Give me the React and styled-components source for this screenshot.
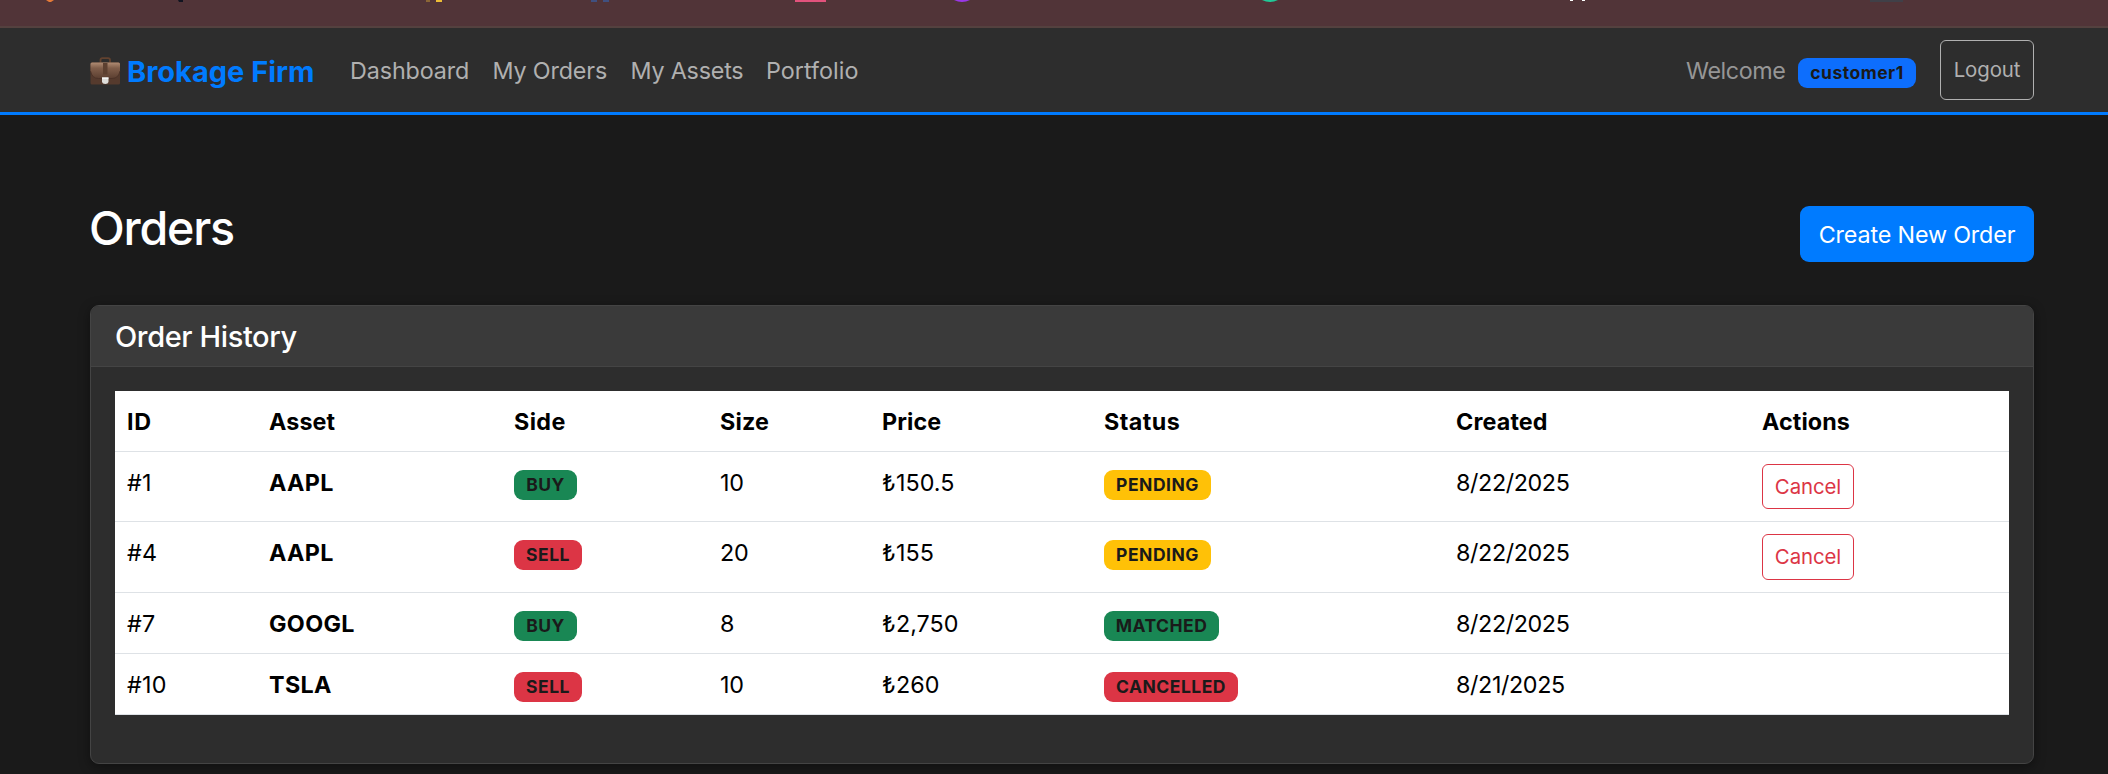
import React from "react";
import styled, { createGlobalStyle } from "styled-components";

const GlobalStyle = createGlobalStyle`
  * { box-sizing: border-box; }
  body {
    margin: 0;
    height: 774px;
    overflow: hidden;
    background: #1a1a1a;
    color: #fff;
    font-family: Inter, "Liberation Sans", sans-serif;
    font-size: 23.3px;
    line-height: 36px;
  }
`;

const BookmarkStrip = styled.div`
  height: 28px;
  background: #513438;
  border-bottom: 2px solid #54413f;
  overflow: hidden;
  svg { display: block; }
`;

const Navbar = styled.header`
  display: flex;
  align-items: center;
  height: 87px;
  padding: 0 74px 0 90px;
  background: #2d2d2d;
  border-bottom: 3px solid #007bff;
`;

const Brand = styled.a`
  display: flex;
  align-items: center;
  gap: 6px;
  width: 248px;
  padding-top: 3px;
  margin-right: 12px;
  font-size: 29px;
  font-weight: 700;
  color: #007bff;
  white-space: nowrap;
  svg { margin-bottom: 1px; }
`;

const NavLinks = styled.nav`
  display: flex;
  padding-top: 2px;
`;

const NavLink = styled.a`
  width: ${(p) => p.$width}px;
  color: #b0b0b0;
  letter-spacing: ${(p) => p.$tracking || 0}px;
  white-space: nowrap;
`;

const UserArea = styled.div`
  display: flex;
  align-items: center;
  margin-left: auto;
`;

const Welcome = styled.span`
  display: flex;
  align-items: baseline;
  gap: 12.5px;
  padding-top: 2px;
  margin-right: 24px;
  color: #969696;
  letter-spacing: -0.4px;
`;

const tones = {
  primary: "#0d6efd",
  success: "#198754",
  danger: "#dc3545",
  warning: "#ffc107",
};

const Badge = styled.span`
  display: inline-block;
  width: ${(p) => p.$width}px;
  height: 30px;
  padding: 6px 0;
  border-radius: 9px;
  background: ${(p) => tones[p.$tone]};
  color: #1a1a1a;
  font-size: 17.5px;
  font-weight: 700;
  line-height: 18px;
  letter-spacing: 0.5px;
  text-align: center;
  white-space: nowrap;
`;

const OutlineButton = styled.button`
  display: block;
  width: ${(p) => p.$width}px;
  height: ${(p) => p.$height}px;
  padding: 0;
  border: 1px solid ${(p) => p.$color};
  border-radius: 6px;
  background: transparent;
  color: ${(p) => p.$color};
  font: 400 20.4px/30px Inter, "Liberation Sans", sans-serif;
  letter-spacing: -0.1px;
`;

const CancelButton = styled(OutlineButton)`
  margin-top: -1px;
`;

const Main = styled.main`
  padding: 84px 74px 0 90px;
`;

const PageHeading = styled.div`
  display: flex;
  justify-content: space-between;
  align-items: center;
  height: 70px;
  margin-bottom: 36px;
`;

const Title = styled.h1`
  margin: 0 0 12px -1px;
  font-size: 46.6px;
  font-weight: 500;
  line-height: 58px;
  letter-spacing: -1.2px;
`;

const PrimaryButton = styled.button`
  width: 234px;
  height: 56px;
  padding: 1px 0 0;
  border: 0;
  border-radius: 9px;
  background: #007bff;
  color: #fff;
  font: 400 23.3px/36px Inter, "Liberation Sans", sans-serif;
  letter-spacing: -0.15px;
`;

const Card = styled.section`
  border: 1px solid #444;
  border-radius: 9px;
  background: #2d2d2d;
  box-shadow: 0 3px 12px rgba(0, 0, 0, 0.4);
`;

const CardHeader = styled.h5`
  margin: 0;
  height: 61px;
  padding: 12px 24px;
  border-bottom: 1px solid #444;
  border-radius: 8px 8px 0 0;
  background: #3a3a3a;
  font-size: 29px;
  font-weight: 500;
  line-height: 37px;
  letter-spacing: -0.38px;
`;

const CardBody = styled.div`
  padding: 24px 24px 48px;
`;

const Table = styled.table`
  width: 100%;
  table-layout: fixed;
  border-collapse: separate;
  border-spacing: 0;
  background: #fff;
  color: #000;
`;

const Row = styled.tr`
  height: ${(p) => p.$height || 61}px;
`;

const cell = `
  padding: 13px 0 0 12px;
  border-bottom: 1px solid #dee2e6;
  text-align: left;
  vertical-align: top;
  line-height: 36px;
  white-space: nowrap;
`;

const HeadCell = styled.th`
  ${cell}
  font-weight: 700;
  letter-spacing: ${(p) => p.$tracking || 0}px;
`;

const Cell = styled.td`
  ${cell}
  font-weight: ${(p) => (p.$strong ? 700 : 400)};
  letter-spacing: ${(p) => p.$tracking || 0}px;
`;

const Briefcase = () => (
  <svg width="31" height="28" viewBox="0 0 31 28">
    <defs>
      <linearGradient id="leather" x1="0" y1="0" x2="0" y2="1">
        <stop offset="0" stopColor="#b08c73" />
        <stop offset="0.35" stopColor="#805e4a" />
        <stop offset="1" stopColor="#5b3f31" />
      </linearGradient>
    </defs>
    <path d="M10.5 6V3Q10.5 1.2 12.5 1.2H18Q20 1.2 20 3V6" fill="none" stroke="#62422f" strokeWidth="1.8" />
    <rect x="0.5" y="5.5" width="29.5" height="22" rx="1.5" fill="#553a2d" />
    <path d="M0.5 7Q0.5 5.5 2 5.5H28.5Q30 5.5 30 7V14Q28.5 21.5 22 21.5H8.5Q2 21.5 0.5 14Z" fill="url(#leather)" />
    <path d="M0.5 14Q2 21.5 8.5 21.5H22Q28.5 21.5 30 14" fill="none" stroke="#493026" strokeWidth="0.8" />
    <rect x="13" y="6" width="4.5" height="11.5" fill="#5d4030" />
    <path d="M12 20.5H18.5V25Q18 26.8 15.3 27Q12.5 26.8 12 25Z" fill="#deddda" />
    <rect x="12" y="20.5" width="6.5" height="1.2" fill="#fff" />
  </svg>
);

const Favicons = () => (
  <svg width="2108" height="3" viewBox="0 0 2108 3">
    <path d="M46 0H54L51 2H49Z" fill="#e57a38" />
    <path d="M178 0H183V2H179Z" fill="#111420" />
    <rect x="426" width="4" height="2" fill="#8b6636" />
    <rect x="436" width="6" height="2" fill="#edbd36" />
    <rect x="591" width="6" height="2" fill="#405080" />
    <rect x="603" width="6" height="2" fill="#405080" />
    <rect x="795" width="31" height="2" fill="#e2527c" />
    <path d="M954 0H970Q962 4 954 0Z" fill="#9a38e8" />
    <path d="M1262 0H1278Q1270 4 1262 0Z" fill="#20c997" />
    <rect x="1570" width="3" height="1" fill="#fff" />
    <rect x="1582" width="3" height="1" fill="#fff" />
    <rect x="1870" width="33" height="2" fill="#404048" />
  </svg>
);

const columns = [
  { label: "ID", width: 142, tracking: 0.7 },
  { label: "Asset", width: 245, tracking: 0.1 },
  { label: "Side", width: 206, tracking: 0.4 },
  { label: "Size", width: 162, tracking: 0.2 },
  { label: "Price", width: 222, tracking: 0.15 },
  { label: "Status", width: 352, tracking: 0.45 },
  { label: "Created", width: 306, tracking: 0.15 },
  { label: "Actions", width: 259, tracking: 0.1 },
];

const sides = {
  BUY: { tone: "success", width: 63 },
  SELL: { tone: "danger", width: 68 },
};

const statuses = {
  PENDING: { tone: "warning", width: 107 },
  MATCHED: { tone: "success", width: 115 },
  CANCELLED: { tone: "danger", width: 134 },
};

const orders = [
  { id: "#1", asset: "AAPL", side: "BUY", size: 10, price: "₺150.5", status: "PENDING", created: "8/22/2025", height: 70, button: 45 },
  { id: "#4", asset: "AAPL", side: "SELL", size: 20, price: "₺155", status: "PENDING", created: "8/22/2025", height: 71, button: 46 },
  { id: "#7", asset: "GOOGL", side: "BUY", size: 8, price: "₺2,750", status: "MATCHED", created: "8/22/2025" },
  { id: "#10", asset: "TSLA", side: "SELL", size: 10, price: "₺260", status: "CANCELLED", created: "8/21/2025" },
];

export default function App() {
  return (
    <>
      <GlobalStyle />
      <BookmarkStrip><Favicons /></BookmarkStrip>
      <Navbar>
        <Brand><Briefcase />Brokage Firm</Brand>
        <NavLinks>
          <NavLink $width={142.5} $tracking={-0.1}>Dashboard</NavLink>
          <NavLink $width={138} $tracking={-0.15}>My Orders</NavLink>
          <NavLink $width={135.5} $tracking={-0.2}>My Assets</NavLink>
          <NavLink $width={100} $tracking={0.05}>Portfolio</NavLink>
        </NavLinks>
        <UserArea>
          <Welcome>
            Welcome
            <Badge $tone="primary" $width={118}>customer1</Badge>
          </Welcome>
          <OutlineButton $color="#b0b0b0" $width={94} $height={60}>Logout</OutlineButton>
        </UserArea>
      </Navbar>
      <Main>
        <PageHeading>
          <Title>Orders</Title>
          <PrimaryButton>Create New Order</PrimaryButton>
        </PageHeading>
        <Card>
          <CardHeader>Order History</CardHeader>
          <CardBody>
            <Table>
              <colgroup>
                {columns.map((c) => <col key={c.label} width={c.width} />)}
              </colgroup>
              <thead>
                <Row>
                  {columns.map((c) => <HeadCell key={c.label} $tracking={c.tracking}>{c.label}</HeadCell>)}
                </Row>
              </thead>
              <tbody>
                {orders.map((o) => (
                  <Row key={o.id} $height={o.height}>
                    <Cell $tracking={0.3}>{o.id}</Cell>
                    <Cell $strong $tracking={0.35}>{o.asset}</Cell>
                    <Cell><Badge $tone={sides[o.side].tone} $width={sides[o.side].width}>{o.side}</Badge></Cell>
                    <Cell $tracking={-0.2}>{o.size}</Cell>
                    <Cell $tracking={0.05}>{o.price}</Cell>
                    <Cell><Badge $tone={statuses[o.status].tone} $width={statuses[o.status].width}>{o.status}</Badge></Cell>
                    <Cell $tracking={-0.38}>{o.created}</Cell>
                    <Cell>
                      {o.button && <CancelButton $color="#dc3545" $width={92} $height={o.button}>Cancel</CancelButton>}
                    </Cell>
                  </Row>
                ))}
              </tbody>
            </Table>
          </CardBody>
        </Card>
      </Main>
    </>
  );
}
